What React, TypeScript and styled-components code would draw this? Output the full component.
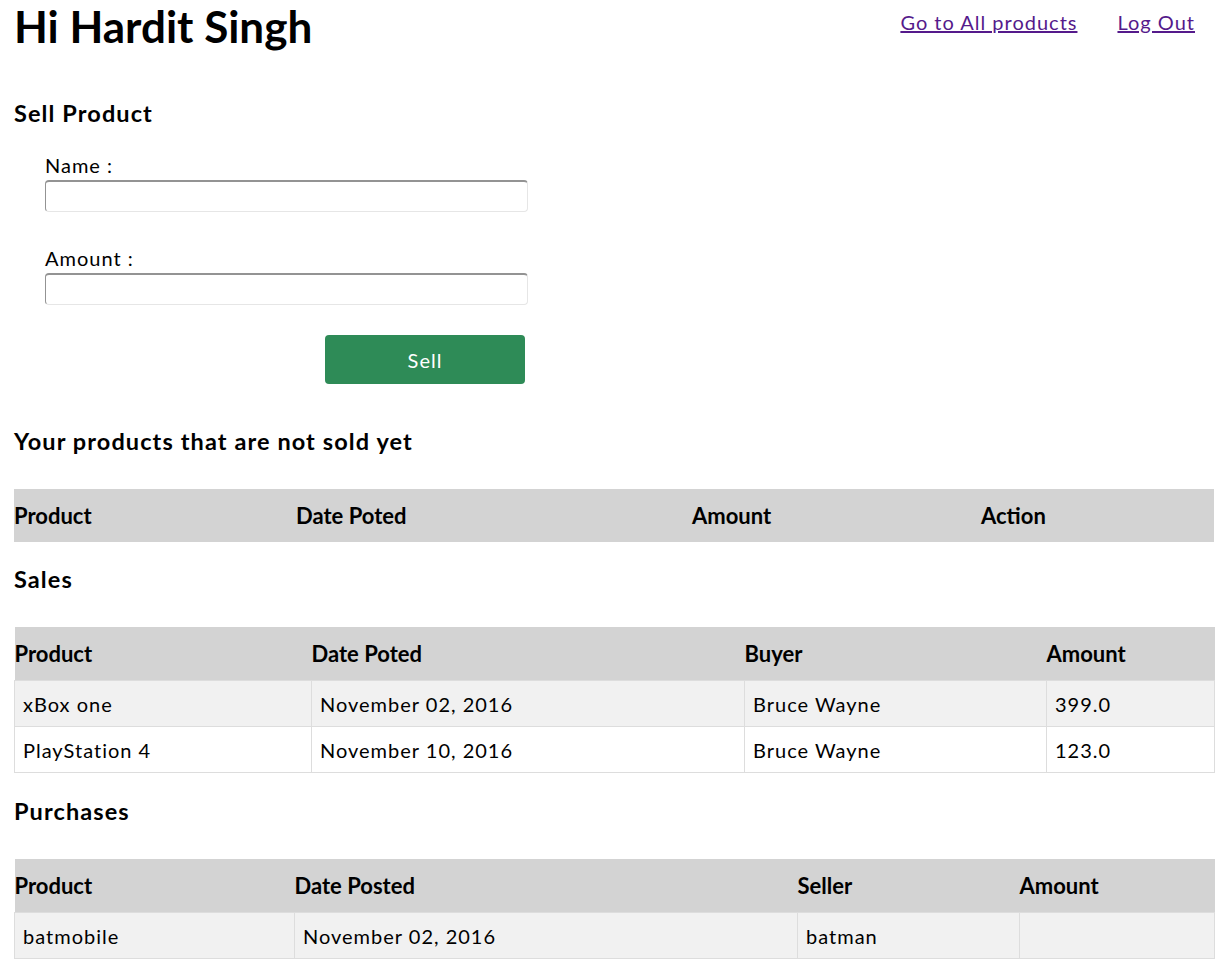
import React from 'react';
import styled, { createGlobalStyle } from 'styled-components';

const GlobalStyle = createGlobalStyle`
  body {
    margin: 0;
    background: #fff;
    color: #000;
    font-family: Lato, "Open Sans", sans-serif;
  }
`;

interface Column {
  label: string;
  width: number;
}

const unsoldColumns: Column[] = [
  { label: 'Product', width: 282 },
  { label: 'Date Poted', width: 396 },
  { label: 'Amount', width: 289 },
  { label: 'Action', width: 233 },
];

const salesColumns: Column[] = [
  { label: 'Product', width: 297 },
  { label: 'Date Poted', width: 433 },
  { label: 'Buyer', width: 302 },
  { label: 'Amount', width: 168 },
];

const purchaseColumns: Column[] = [
  { label: 'Product', width: 280 },
  { label: 'Date Posted', width: 503 },
  { label: 'Seller', width: 222 },
  { label: 'Amount', width: 195 },
];

const sales = [
  ['xBox one', 'November 02, 2016', 'Bruce Wayne', '399.0'],
  ['PlayStation 4', 'November 10, 2016', 'Bruce Wayne', '123.0'],
];

const purchases = [['batmobile', 'November 02, 2016', 'batman', '']];

const DataTable = ({ columns, rows }: { columns: Column[]; rows: string[][] }) => (
  <Table>
    <colgroup>
      {columns.map((c) => (
        <col key={c.label} style={{ width: c.width }} />
      ))}
    </colgroup>
    <thead>
      <tr>
        {columns.map((c) => (
          <Th key={c.label}>{c.label}</Th>
        ))}
      </tr>
    </thead>
    <tbody>
      {rows.map((row, i) => (
        <Tr key={i} striped={i % 2 === 0}>
          {row.map((cell, j) => (
            <Td key={j}>{cell}</Td>
          ))}
        </Tr>
      ))}
    </tbody>
  </Table>
);

export default function App() {
  return (
    <Page>
      <GlobalStyle />
      <Header>
        <Title>Hi Hardit Singh</Title>
        <Nav>
          <NavLink href="#">Go to All products</NavLink>
          <NavLink href="#">Log Out</NavLink>
        </Nav>
      </Header>

      <SectionTitle space={47}>Sell Product</SectionTitle>
      <Form onSubmit={(e) => e.preventDefault()}>
        <Field>
          <Label>Name :</Label>
          <Input type="text" />
        </Field>
        <Field>
          <Label>Amount :</Label>
          <Input type="text" />
        </Field>
        <SellButton type="submit">Sell</SellButton>
      </Form>

      <SectionTitle space={43}>Your products that are not sold yet</SectionTitle>
      <DataTable columns={unsoldColumns} rows={[]} />

      <SectionTitle space={23}>Sales</SectionTitle>
      <DataTable columns={salesColumns} rows={sales} />

      <SectionTitle space={24}>Purchases</SectionTitle>
      <DataTable columns={purchaseColumns} rows={purchases} />
    </Page>
  );
}

const Page = styled.div`
  padding: 0 9px 40px 14px;
`;

const Header = styled.header`
  display: flex;
  justify-content: space-between;
  align-items: flex-start;
`;

const Title = styled.h1`
  margin: 0;
  font-size: 44px;
  line-height: 52px;
  font-weight: 700;
`;

const Nav = styled.nav`
  display: flex;
  gap: 40px;
  padding-top: 10px;
  margin-right: 20px;
`;

const NavLink = styled.a`
  font-size: 20px;
  line-height: 24px;
  letter-spacing: 1px;
  color: #551a8b;
  text-decoration: underline;
`;

const SectionTitle = styled.h3<{ space: number }>`
  margin: ${({ space }) => space}px 0 34px;
  font-size: 23.5px;
  line-height: 28px;
  letter-spacing: 1.1px;
  font-weight: 700;
`;

const Form = styled.form`
  display: flex;
  flex-direction: column;
  width: 483px;
  padding-left: 31px;
  margin-top: -8px;
`;

const Field = styled.div`
  display: flex;
  flex-direction: column;
  gap: 3px;
  margin-bottom: 34px;
`;

const Label = styled.label`
  font-size: 20px;
  line-height: 24px;
  letter-spacing: 1px;
`;

const Input = styled.input`
  box-sizing: border-box;
  width: 483px;
  height: 32px;
  border: 1px solid #e6e6e6;
  border-top: 2px solid #939393;
  border-left: 1px solid #939393;
  border-radius: 4px;
  background: #fff;
  font: inherit;
`;

const SellButton = styled.button`
  align-self: flex-start;
  margin: -4px 0 0 280px;
  width: 200px;
  height: 49px;
  border: none;
  border-radius: 4px;
  background: #2e8b57;
  color: #fff;
  font-family: inherit;
  font-size: 20px;
  letter-spacing: 1px;
  cursor: pointer;
`;

const Table = styled.table`
  width: 1200px;
  table-layout: fixed;
  border-collapse: collapse;
`;

const Th = styled.th`
  height: 53px;
  padding: 0;
  background: #d3d3d3;
  text-align: left;
  font-size: 22px;
  font-weight: 700;
`;

const Tr = styled.tr<{ striped: boolean }>`
  background: ${({ striped }) => (striped ? '#f1f1f1' : '#fff')};
`;

const Td = styled.td`
  height: 45px;
  padding: 0 8px;
  border: 1px solid #dddddd;
  font-size: 20px;
  letter-spacing: 1px;
`;
